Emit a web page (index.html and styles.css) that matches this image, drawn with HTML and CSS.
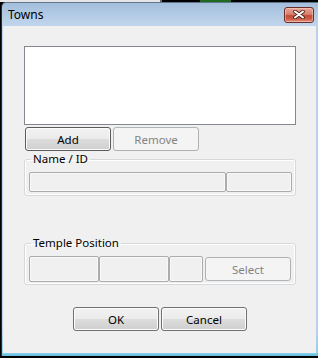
FILE: index.html
```html
<!DOCTYPE html>
<html lang="en">
  <head>
    <meta charset="UTF-8" />
    <title>Towns</title>
    <link rel="stylesheet" href="styles.css">
  </head>
  <body>
    <div class="desktop"></div>
    <div class="window">
      <div class="titlebar">
        <span class="title">Towns</span>
        <button class="close" title="Close">
          <svg width="12" height="9" viewBox="0 0 12 9">
            <path d="M2 1.5 L10 7.5 M10 1.5 L2 7.5" stroke="#4a1f1a" stroke-width="3.6" stroke-linecap="round" fill="none"/>
            <path d="M2 1.5 L10 7.5 M10 1.5 L2 7.5" stroke="#ffffff" stroke-width="2" stroke-linecap="round" fill="none"/>
          </svg>
        </button>
      </div>

      <div class="panel">
        <div class="listbox"></div>

        <div class="list-actions">
          <button class="btn default">Add</button>
          <button class="btn" disabled>Remove</button>
        </div>

        <fieldset class="group group-name">
          <legend>Name / ID</legend>
          <div class="fields">
            <input class="field field-name" type="text" disabled>
            <input class="field field-id" type="text" disabled>
          </div>
        </fieldset>

        <fieldset class="group group-temple">
          <legend>Temple Position</legend>
          <div class="fields">
            <input class="field field-pos" type="text" disabled>
            <input class="field field-pos" type="text" disabled>
            <input class="field field-z" type="text" disabled>
            <button class="btn select" disabled>Select</button>
          </div>
        </fieldset>

        <div class="footer">
          <button class="btn">OK</button>
          <button class="btn">Cancel</button>
        </div>
      </div>
    </div>
  </body>
</html>
```

FILE: styles.css
```css
* {
  margin: 0;
  padding: 0;
  box-sizing: border-box;
}

body {
  width: 318px;
  height: 358px;
  overflow: hidden;
  background: #000;
  font-family: "Segoe UI", "Noto Sans", "Open Sans", sans-serif;
  font-size: 12px;
  color: #000;
}

.desktop {
  height: 2px;
  background: linear-gradient(to right, #e6e6e6 0, #e6e6e6 160px, #6a6a6a 160px, #6a6a6a 162px, #000 162px, #000 200px, #1f6a1f 200px, #1f6a1f 231px, #000 231px);
}

.window {
  margin-left: 1px;
  height: 354px;
  border-left: 1px solid #2c2c2c;
  border-top: 1px solid #61768c;
  border-radius: 5px 0 0 0;
  background: linear-gradient(#a3bedc 0, #c1d6ec 23px, #b9d1ea 23px, #b9d1ea 327px, #8fd0ea 350px, #5cbbdc 353px);
  display: flex;
  flex-direction: column;
}

.titlebar {
  height: 23px;
  display: flex;
  align-items: center;
  justify-content: space-between;
  padding: 0 4px 0 6px;
}

.title {
  font-size: 12px;
  color: #000;
}

.close {
  width: 30px;
  height: 16px;
  border: 1px solid #6a2d2a;
  border-radius: 3px;
  background: linear-gradient(#e8a595 0%, #d7806e 45%, #c24a33 55%, #cd5f48 80%, #e59a86 100%);
  box-shadow: inset 0 0 0 1px rgba(255, 220, 210, 0.45);
  display: flex;
  align-items: center;
  justify-content: center;
}

.panel {
  height: 327px;
  margin: 0 2px 0 1px;
  background: #f0f0f0;
}

.listbox {
  width: 272px;
  height: 79px;
  margin: 20px 0 0 21px;
  background: #fff;
  border: 1px solid #828790;
}

.list-actions {
  display: flex;
  gap: 2px;
  margin: 2px 0 0 22px;
}

.btn {
  width: 86px;
  height: 24px;
  border: 1px solid #707070;
  border-radius: 3px;
  background: linear-gradient(#f2f2f2 0%, #ebebeb 50%, #dddddd 50%, #cfcfcf 100%);
  box-shadow: inset 0 0 0 1px #fbfbfb;
  font-family: inherit;
  font-size: 11.5px;
  color: #000;
}

.btn.default {
  border-color: #5c5c5c;
}

.btn:disabled {
  border-color: #adb2b5;
  background: #f4f4f4;
  box-shadow: none;
  color: #838383;
}

.group {
  width: 272px;
  margin-left: 21px;
  border: 1px solid #d5d9dc;
  border-radius: 3px;
  box-shadow: inset 0 0 0 1px #fff;
  padding: 5px 3px 3px 4px;
}

.group legend {
  margin-left: 2px;
  padding: 0 2px;
  line-height: 16px;
  font-size: 11.5px;
}

.group-temple {
  margin-top: 39px;
  padding-bottom: 2px;
}

.fields {
  display: flex;
  align-items: center;
}

.field {
  height: 20px;
  border: 1px solid #acacac;
  border-radius: 2px;
  background: #f0f0f0;
  box-shadow: inset 0 0 0 1px #f8f8f8;
}

.field-name {
  width: 197px;
}

.field-id {
  width: 66px;
}

.group-temple .field {
  height: 26px;
}

.field-pos {
  width: 70px;
}

.field-z {
  width: 34px;
}

.select {
  margin-left: 2px;
}

.footer {
  display: flex;
  gap: 2px;
  margin: 22px 0 0 70px;
}
```
